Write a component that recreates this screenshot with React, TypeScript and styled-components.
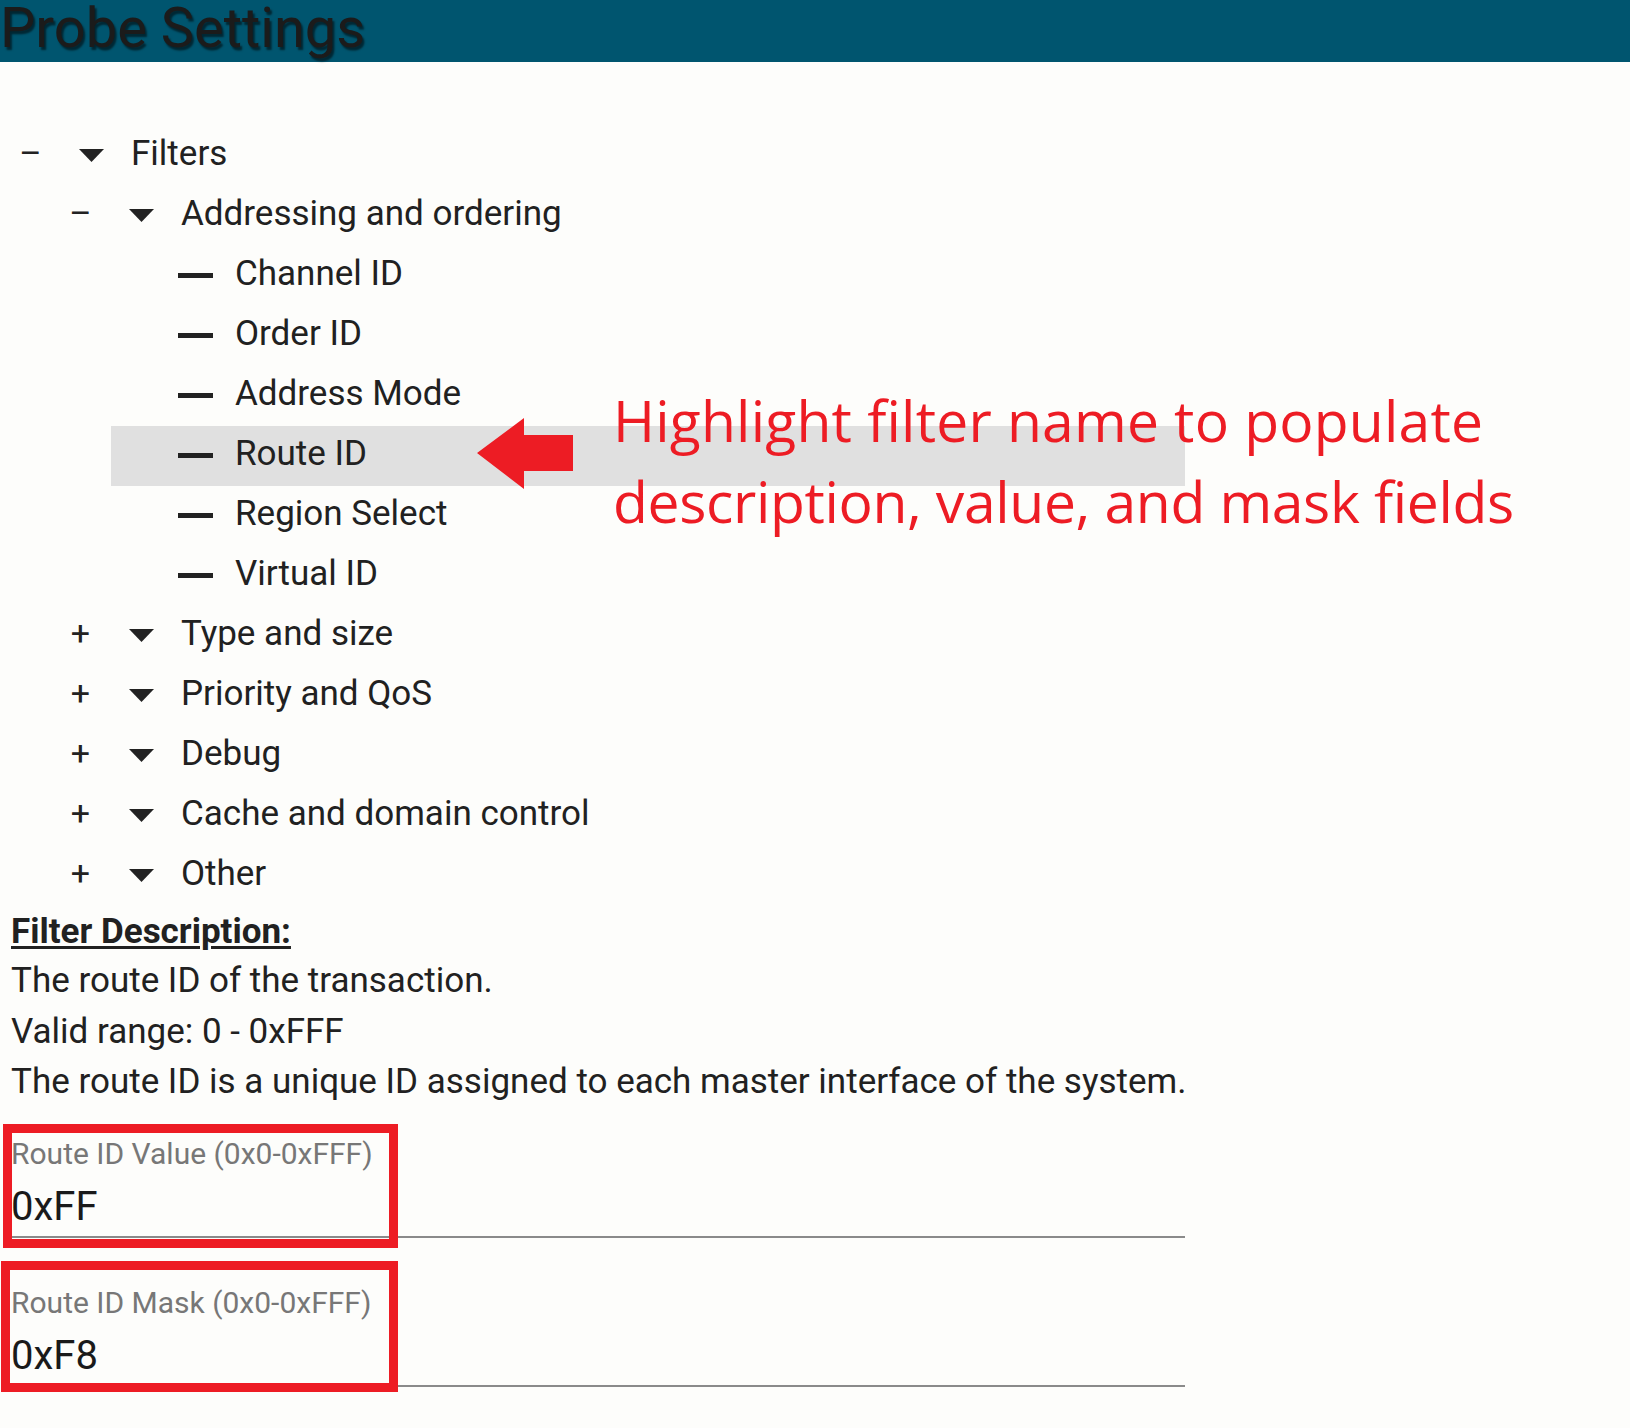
import React from "react";
import styled, { createGlobalStyle } from "styled-components";

const GlobalStyle = createGlobalStyle`
  html, body { margin: 0; padding: 0; background: #fdfdfb; }
  body { font-family: Roboto, "Liberation Sans", Arial, sans-serif; color: #212121; }
  * { box-sizing: border-box; }
`;

const Page = styled.div`
  position: relative;
  width: 100%;
  min-height: 1428px;
  background: #fdfdfb;
`;

const Header = styled.header`
  height: 62px;
  background: #00556f;
`;

const Title = styled.h1`
  margin: 0;
  font-family: Roboto, sans-serif;
  font-weight: 400;
  font-size: 56px;
  line-height: 56px;
  color: #1b1b1b;
  text-shadow: 2px 3px 2px rgba(0, 0, 0, 0.55);
  white-space: nowrap;
`;

const Main = styled.main`
  width: 1174px;
  margin-left: 11px;
  padding-top: 64px;
`;

const TreeList = styled.ul<{ $nested?: boolean }>`
  list-style: none;
  margin: 0 0 0 ${(p) => (p.$nested ? 50 : 0)}px;
  padding: 0;
`;

const Row = styled.div<{ $selected?: boolean }>`
  display: flex;
  align-items: center;
  height: 60px;
  padding-bottom: 5px;
  line-height: 55px;
  font-size: 35px;
  color: #212121;
  background: ${(p) => (p.$selected ? "#e0e0e0" : "transparent")};
`;

const Toggle = styled.span`
  flex: none;
  width: 39px;
  text-align: center;
  font-size: 34px;
  color: #222;
`;

const Caret = styled.svg`
  flex: none;
  margin: 4px 27px 0 29px;
  display: block;
`;

const LeafDash = styled.span`
  flex: none;
  display: block;
  width: 35px;
  height: 5px;
  margin: 3px 22px 0 67px;
  background: #222;
`;

const RowLabel = styled.span`
  white-space: nowrap;
`;

const Description = styled.section`
  padding-top: 1px;
  font-size: 35px;
  line-height: 50px;
  color: #212121;
`;

const DescHeading = styled.div`
  font-weight: 700;
  line-height: 49px;
  text-decoration: underline;
  text-decoration-thickness: 3px;
  text-underline-offset: 3px;
`;

const DescLine = styled.div`
  white-space: nowrap;
  line-height: 50.5px;
`;

const Fields = styled.div`
  display: flex;
  flex-direction: column;
  gap: 48px;
  margin-top: 29px;
`;

const Field = styled.label`
  position: relative;
  display: block;
  padding-bottom: 6px;
  border-bottom: 2px solid #8a8a8a;
`;

const FieldLabel = styled.span`
  display: block;
  font-size: 30px;
  line-height: 34px;
  color: #777777;
  margin-bottom: 13px;
  white-space: nowrap;
`;

const FieldInput = styled.input`
  display: block;
  width: 100%;
  height: 46px;
  margin: 0;
  padding: 0;
  border: 0;
  outline: none;
  background: transparent;
  font-family: Roboto, sans-serif;
  font-size: 40px;
  color: #1a1a1a;
`;

const Callout = styled.span<{ $left: number; $top: number; $w: number; $h: number }>`
  position: absolute;
  left: ${(p) => p.$left}px;
  top: ${(p) => p.$top}px;
  width: ${(p) => p.$w}px;
  height: ${(p) => p.$h}px;
  border: 9px solid #ed1c24;
  pointer-events: none;
  z-index: 2;
`;

const Annotation = styled.div`
  position: absolute;
  left: 613px;
  top: 380px;
  font-family: "Open Sans", "Noto Sans", sans-serif;
  font-size: 57px;
  line-height: 81px;
  color: #ed1c24;
  white-space: nowrap;
  z-index: 3;
`;

const AnnotationLine = styled.div<{ $spacing: number }>`
  letter-spacing: ${(p) => p.$spacing}px;
`;

const Arrow = styled.svg`
  position: absolute;
  left: 477px;
  top: 418px;
  z-index: 3;
`;

type GroupProps = {
  label: string;
  expanded?: boolean;
  children?: React.ReactNode;
};

const CaretIcon = () => (
  <Caret width="25" height="13" viewBox="0 0 25 13">
    <polygon points="0,0 25,0 12.5,13" fill="#222" />
  </Caret>
);

const Group = ({ label, expanded, children }: GroupProps) => (
  <li>
    <Row>
      <Toggle>{expanded ? "–" : "+"}</Toggle>
      <CaretIcon />
      <RowLabel>{label}</RowLabel>
    </Row>
    {expanded && children ? <TreeList $nested>{children}</TreeList> : null}
  </li>
);

const Leaf = ({ label, selected }: { label: string; selected?: boolean }) => (
  <li>
    <Row $selected={selected}>
      <LeafDash />
      <RowLabel>{label}</RowLabel>
    </Row>
  </li>
);

const leaves = ["Channel ID", "Order ID", "Address Mode", "Route ID", "Region Select", "Virtual ID"];
const collapsed = ["Type and size", "Priority and QoS", "Debug", "Cache and domain control", "Other"];

export default function App() {
  return (
    <>
      <GlobalStyle />
      <Page>
        <Header>
          <Title>Probe Settings</Title>
        </Header>
        <Main>
          <TreeList>
            <Group label="Filters" expanded>
              <Group label="Addressing and ordering" expanded>
                {leaves.map((l) => (
                  <Leaf key={l} label={l} selected={l === "Route ID"} />
                ))}
              </Group>
              {collapsed.map((c) => (
                <Group key={c} label={c} />
              ))}
            </Group>
          </TreeList>
          <Description>
            <DescHeading>Filter Description:</DescHeading>
            <DescLine>The route ID of the transaction.</DescLine>
            <DescLine>Valid range: 0 - 0xFFF</DescLine>
            <DescLine>The route ID is a unique ID assigned to each master interface of the system.</DescLine>
          </Description>
          <Fields>
            <Field>
              <FieldLabel>Route ID Value (0x0-0xFFF)</FieldLabel>
              <FieldInput readOnly defaultValue="0xFF" />
              <Callout $left={-8} $top={-13} $w={395} $h={124} />
            </Field>
            <Field>
              <FieldLabel>Route ID Mask (0x0-0xFFF)</FieldLabel>
              <FieldInput readOnly defaultValue="0xF8" />
              <Callout $left={-10} $top={-25} $w={397} $h={131} />
            </Field>
          </Fields>
        </Main>
        <Arrow width="96" height="71" viewBox="0 0 96 71">
          <polygon points="0,35 47,0 47,17 96,17 96,53 47,53 47,71" fill="#ed1c24" />
        </Arrow>
        <Annotation>
          <AnnotationLine $spacing={0.2}>Highlight filter name to populate</AnnotationLine>
          <AnnotationLine $spacing={-0.35}>description, value, and mask fields</AnnotationLine>
        </Annotation>
      </Page>
    </>
  );
}
